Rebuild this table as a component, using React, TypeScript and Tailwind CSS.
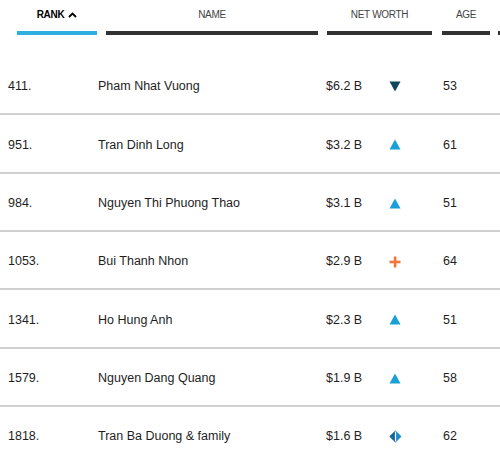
import React from "react";

type Trend = "down" | "up" | "plus" | "same";

const rows: { rank: string; name: string; worth: string; trend: Trend; age: string }[] = [
  { rank: "411.", name: "Pham Nhat Vuong", worth: "$6.2 B", trend: "down", age: "53" },
  { rank: "951.", name: "Tran Dinh Long", worth: "$3.2 B", trend: "up", age: "61" },
  { rank: "984.", name: "Nguyen Thi Phuong Thao", worth: "$3.1 B", trend: "up", age: "51" },
  { rank: "1053.", name: "Bui Thanh Nhon", worth: "$2.9 B", trend: "plus", age: "64" },
  { rank: "1341.", name: "Ho Hung Anh", worth: "$2.3 B", trend: "up", age: "51" },
  { rank: "1579.", name: "Nguyen Dang Quang", worth: "$1.9 B", trend: "up", age: "58" },
  { rank: "1818.", name: "Tran Ba Duong & family", worth: "$1.6 B", trend: "same", age: "62" },
];

function TrendIcon({ t }: { t: Trend }) {
  if (t === "down")
    return (
      <svg width="12" height="11" viewBox="0 0 12 11">
        <polygon points="0.5,0.5 11.5,0.5 6,10.5" fill="#0f4658" />
      </svg>
    );
  if (t === "up")
    return (
      <svg width="12" height="11" viewBox="0 0 12 11">
        <polygon points="6,0.5 11.5,10.5 0.5,10.5" fill="#1a9fd6" />
      </svg>
    );
  if (t === "plus")
    return (
      <svg width="12" height="12" viewBox="0 0 12 12">
        <rect x="4.8" y="0.5" width="2.6" height="11" fill="#f0763a" />
        <rect x="0.5" y="4.7" width="11" height="2.6" fill="#f0763a" />
      </svg>
    );
  return (
    <svg width="13" height="13" viewBox="0 0 13 13">
      <polygon points="6.5,0.5 12.5,6.5 6.5,12.5 0.5,6.5" fill="#1c8cc9" />
      <polygon points="6.5,0.5 0.5,6.5 6.5,12.5" fill="#16679a" />
      <rect x="5.9" y="1.5" width="1.2" height="10" fill="#ffffff" />
    </svg>
  );
}

export default function App() {
  return (
    <div
      className="w-[500px] h-[463px] overflow-hidden bg-white text-[#1e1e1e]"
      style={{ fontFamily: '"Liberation Sans", Arial, sans-serif' }}
    >
      {/* header */}
      <div className="h-[57px] flex items-start">
        <div className="ml-[17px] w-[80px] flex flex-col items-center">
          <div className="h-[29px] flex items-center gap-[4px] text-[10px] font-bold tracking-[-0.3px] text-black">
            RANK
            <svg width="9" height="6" viewBox="0 0 9 6">
              <polyline points="1,5 4.5,1.5 8,5" fill="none" stroke="#000" strokeWidth="1.8" />
            </svg>
          </div>
          <div className="w-full h-[4px] mt-[2px] bg-[#2bb0e0]" />
        </div>
        <div className="ml-[9px] w-[212px] flex flex-col items-center">
          <div className="h-[29px] flex items-center text-[10px] tracking-[-0.3px] text-[#444]">NAME</div>
          <div className="w-full h-[4px] mt-[2px] bg-[#333]" />
        </div>
        <div className="ml-[9px] w-[105px] flex flex-col items-center">
          <div className="h-[29px] flex items-center text-[10px] tracking-[-0.3px] text-[#444]">NET WORTH</div>
          <div className="w-full h-[4px] mt-[2px] bg-[#333]" />
        </div>
        <div className="ml-[10px] w-[48px] flex flex-col items-center">
          <div className="h-[29px] flex items-center text-[10px] tracking-[-0.3px] text-[#444]">AGE</div>
          <div className="w-full h-[4px] mt-[2px] bg-[#333]" />
        </div>
        <div className="ml-[8px] flex-1 flex flex-col">
          <div className="h-[29px]" />
          <div className="w-full h-[4px] mt-[2px] bg-[#333]" />
        </div>
      </div>

      {/* rows */}
      {rows.map((r) => (
        <div
          key={r.rank}
          className="h-[58.33px] pt-[3px] flex items-center border-b-2 border-[#d0d0d0] text-[12.5px]"
        >
          <div className="pl-[8px] w-[98px]">{r.rank}</div>
          <div className="w-[228px]">{r.name}</div>
          <div className="w-[57px]">{r.worth}</div>
          <div className="w-[60px] flex items-center pl-[6px]">
            <TrendIcon t={r.trend} />
          </div>
          <div>{r.age}</div>
        </div>
      ))}
    </div>
  );
}
